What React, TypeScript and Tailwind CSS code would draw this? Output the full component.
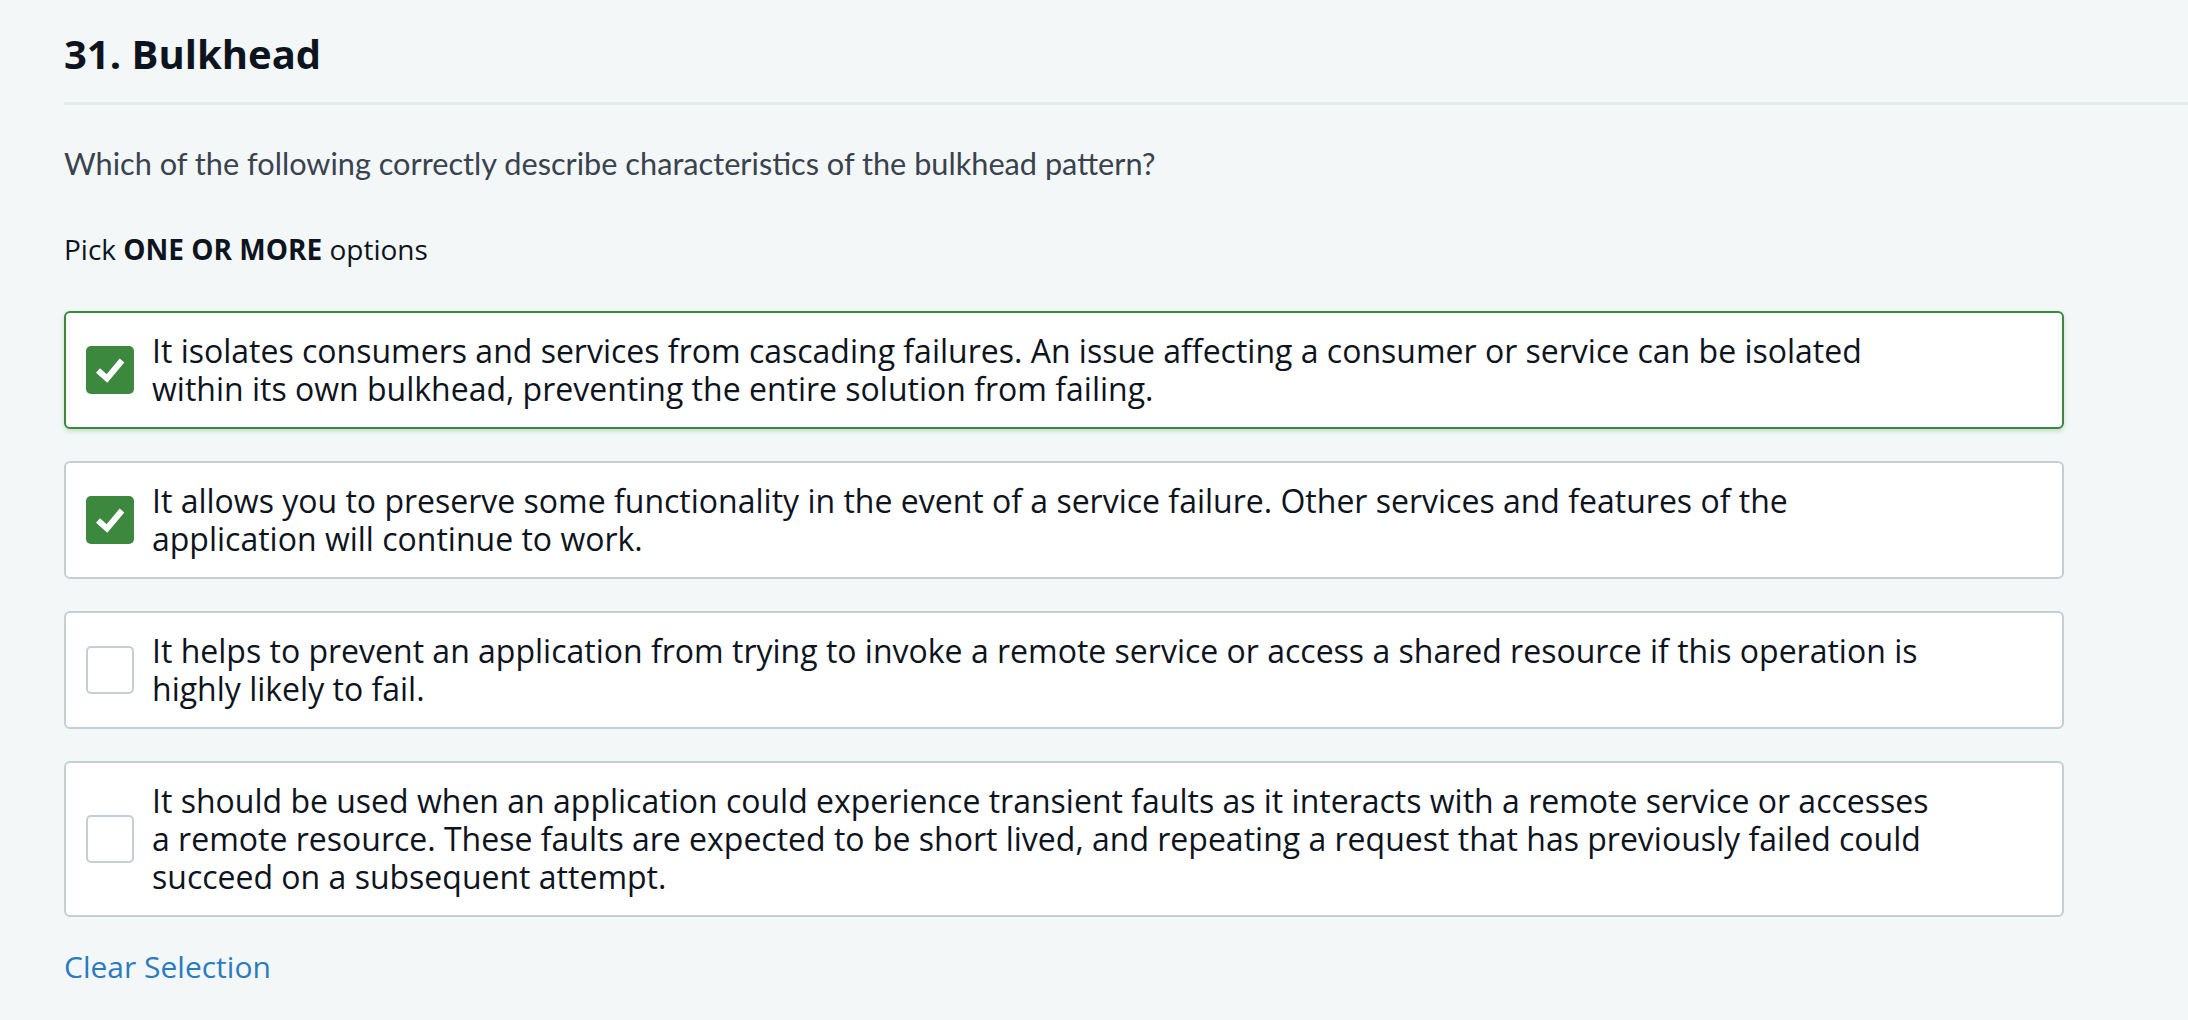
import { useState } from 'react'

type Option = { id: number; text: string }

const options: Option[] = [
  {
    id: 1,
    text: 'It isolates consumers and services from cascading failures. An issue affecting a consumer or service can be isolated within its own bulkhead, preventing the entire solution from failing.',
  },
  {
    id: 2,
    text: 'It allows you to preserve some functionality in the event of a service failure. Other services and features of the application will continue to work.',
  },
  {
    id: 3,
    text: 'It helps to prevent an application from trying to invoke a remote service or access a shared resource if this operation is highly likely to fail.',
  },
  {
    id: 4,
    text: 'It should be used when an application could experience transient faults as it interacts with a remote service or accesses a remote resource. These faults are expected to be short lived, and repeating a request that has previously failed could succeed on a subsequent attempt.',
  },
]

function Checkbox({ checked }: { checked: boolean }) {
  if (!checked) {
    return (
      <span className="block h-[48px] w-[48px] shrink-0 rounded-[5px] border-2 border-[#c3cfd3] bg-white" />
    )
  }
  return (
    <span className="flex h-[48px] w-[48px] shrink-0 items-center justify-center rounded-[5px] bg-[#3b883e]">
      <svg width="48" height="48" viewBox="0 0 48 48" fill="none">
        <path d="M12 24.5 L21 32.5 L36 14.5" stroke="white" strokeWidth="6" strokeLinecap="butt" />
      </svg>
    </span>
  )
}

export default function App() {
  const [selected, setSelected] = useState<number[]>([1, 2])
  const focused = 1

  const toggle = (id: number) =>
    setSelected((s) => (s.includes(id) ? s.filter((x) => x !== id) : [...s, id]))

  return (
    <div
      className="min-h-[1020px] w-full bg-[#f3f7f7] pl-[64px] pt-[30px] text-[#0e141e]"
      style={{ fontFamily: '"Open Sans", "Noto Sans", sans-serif' }}
    >
      <h1 className="text-[40px] font-bold leading-[48px]">31. Bulkhead</h1>
      <div className="mt-[24px] h-[3px] bg-[#e6ebee]" />

      <p
        className="mt-[39px] text-[30.7px] leading-[40px] text-[#39424e]"
        style={{ fontFamily: 'Lato, "Open Sans", sans-serif' }}
      >
        Which of the following correctly describe characteristics of the bulkhead pattern?
      </p>

      <p className="mt-[47px] text-[28px] leading-[36px]">
        Pick <span className="font-bold">ONE OR MORE</span> options
      </p>

      <div className="mt-[44px] flex w-[2000px] flex-col gap-[32px]">
        {options.map((o) => {
          const isChecked = selected.includes(o.id)
          return (
            <label
              key={o.id}
              onClick={() => toggle(o.id)}
              className={`flex cursor-pointer items-center gap-[18px] rounded-[6px] border-2 bg-white py-[19px] pl-[20px] ${
                o.id === focused
                  ? 'border-[#3b883e] shadow-[0_2px_4px_rgba(59,136,62,0.25)]'
                  : 'border-[#c3cfd3]'
              }`}
            >
              <Checkbox checked={isChecked} />
              <span className="w-[1790px] text-[32px] leading-[38px]">{o.text}</span>
            </label>
          )
        })}
      </div>

      <button
        onClick={() => setSelected([])}
        className="mt-[30px] text-[30px] leading-[40px] text-[#2a7bbf]"
      >
        Clear Selection
      </button>
    </div>
  )
}
